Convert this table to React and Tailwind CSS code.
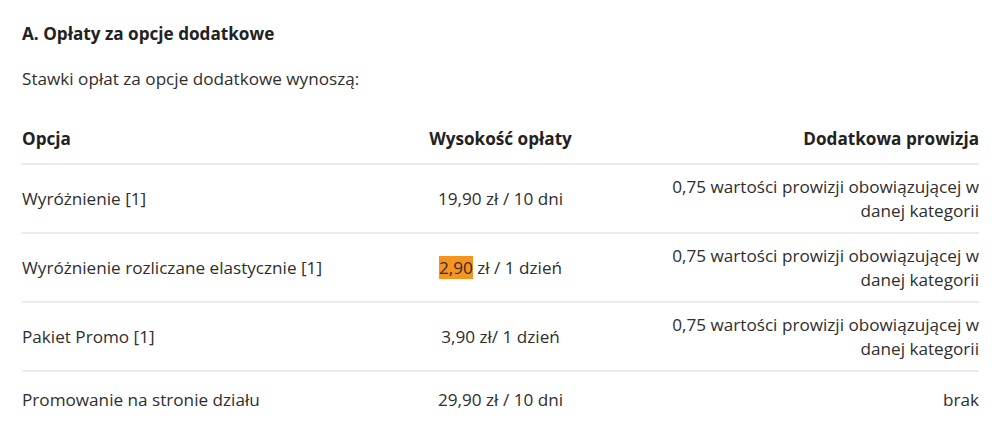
const rows = [
  {
    opcja: 'Wyróżnienie [1]',
    oplata: '19,90 zł / 10 dni',
    prowizja: '0,75 wartości prowizji obowiązującej w danej kategorii',
  },
  {
    opcja: 'Wyróżnienie rozliczane elastycznie [1]',
    oplata: (
      <>
        <span className="bg-[#f7941e]">2,90</span> zł / 1 dzień
      </>
    ),
    prowizja: '0,75 wartości prowizji obowiązującej w danej kategorii',
  },
  {
    opcja: 'Pakiet Promo [1]',
    oplata: '3,90 zł/ 1 dzień',
    prowizja: '0,75 wartości prowizji obowiązującej w danej kategorii',
  },
  {
    opcja: 'Promowanie na stronie działu',
    oplata: '29,90 zł / 10 dni',
    prowizja: 'brak',
  },
];

export default function App() {
  return (
    <div className="bg-white w-[998px] h-[431px] overflow-hidden px-[22px] pt-[22px] text-[17.15px] leading-6 text-[#2e2e2e] font-['Open_Sans',sans-serif]">
      <h3 className="font-bold text-[#222]">A. Opłaty za opcje dodatkowe</h3>
      <p className="mt-[21px]">Stawki opłat za opcje dodatkowe wynoszą:</p>

      {/* Tabela opłat */}
      <table className="mt-[23px] w-[957px] table-fixed border-collapse">
        <thead>
          <tr className="border-b-2 border-[#ebebeb] h-[50px] text-[#222]">
            <th className="text-left font-bold align-middle">Opcja</th>
            <th className="text-center font-bold align-middle">Wysokość opłaty</th>
            <th className="text-right font-bold align-middle">Dodatkowa prowizja</th>
          </tr>
        </thead>
        <tbody>
          {rows.map((r, i) => {
            const last = i === rows.length - 1;
            return (
              <tr
                key={i}
                className={last ? 'h-[56px]' : 'h-[69px] border-b-2 border-[#ebebeb]'}
              >
                <td className="text-left align-middle">{r.opcja}</td>
                <td className="text-center align-middle">{r.oplata}</td>
                <td className="text-right align-middle pl-[4px]">{r.prowizja}</td>
              </tr>
            );
          })}
        </tbody>
      </table>
    </div>
  );
}
